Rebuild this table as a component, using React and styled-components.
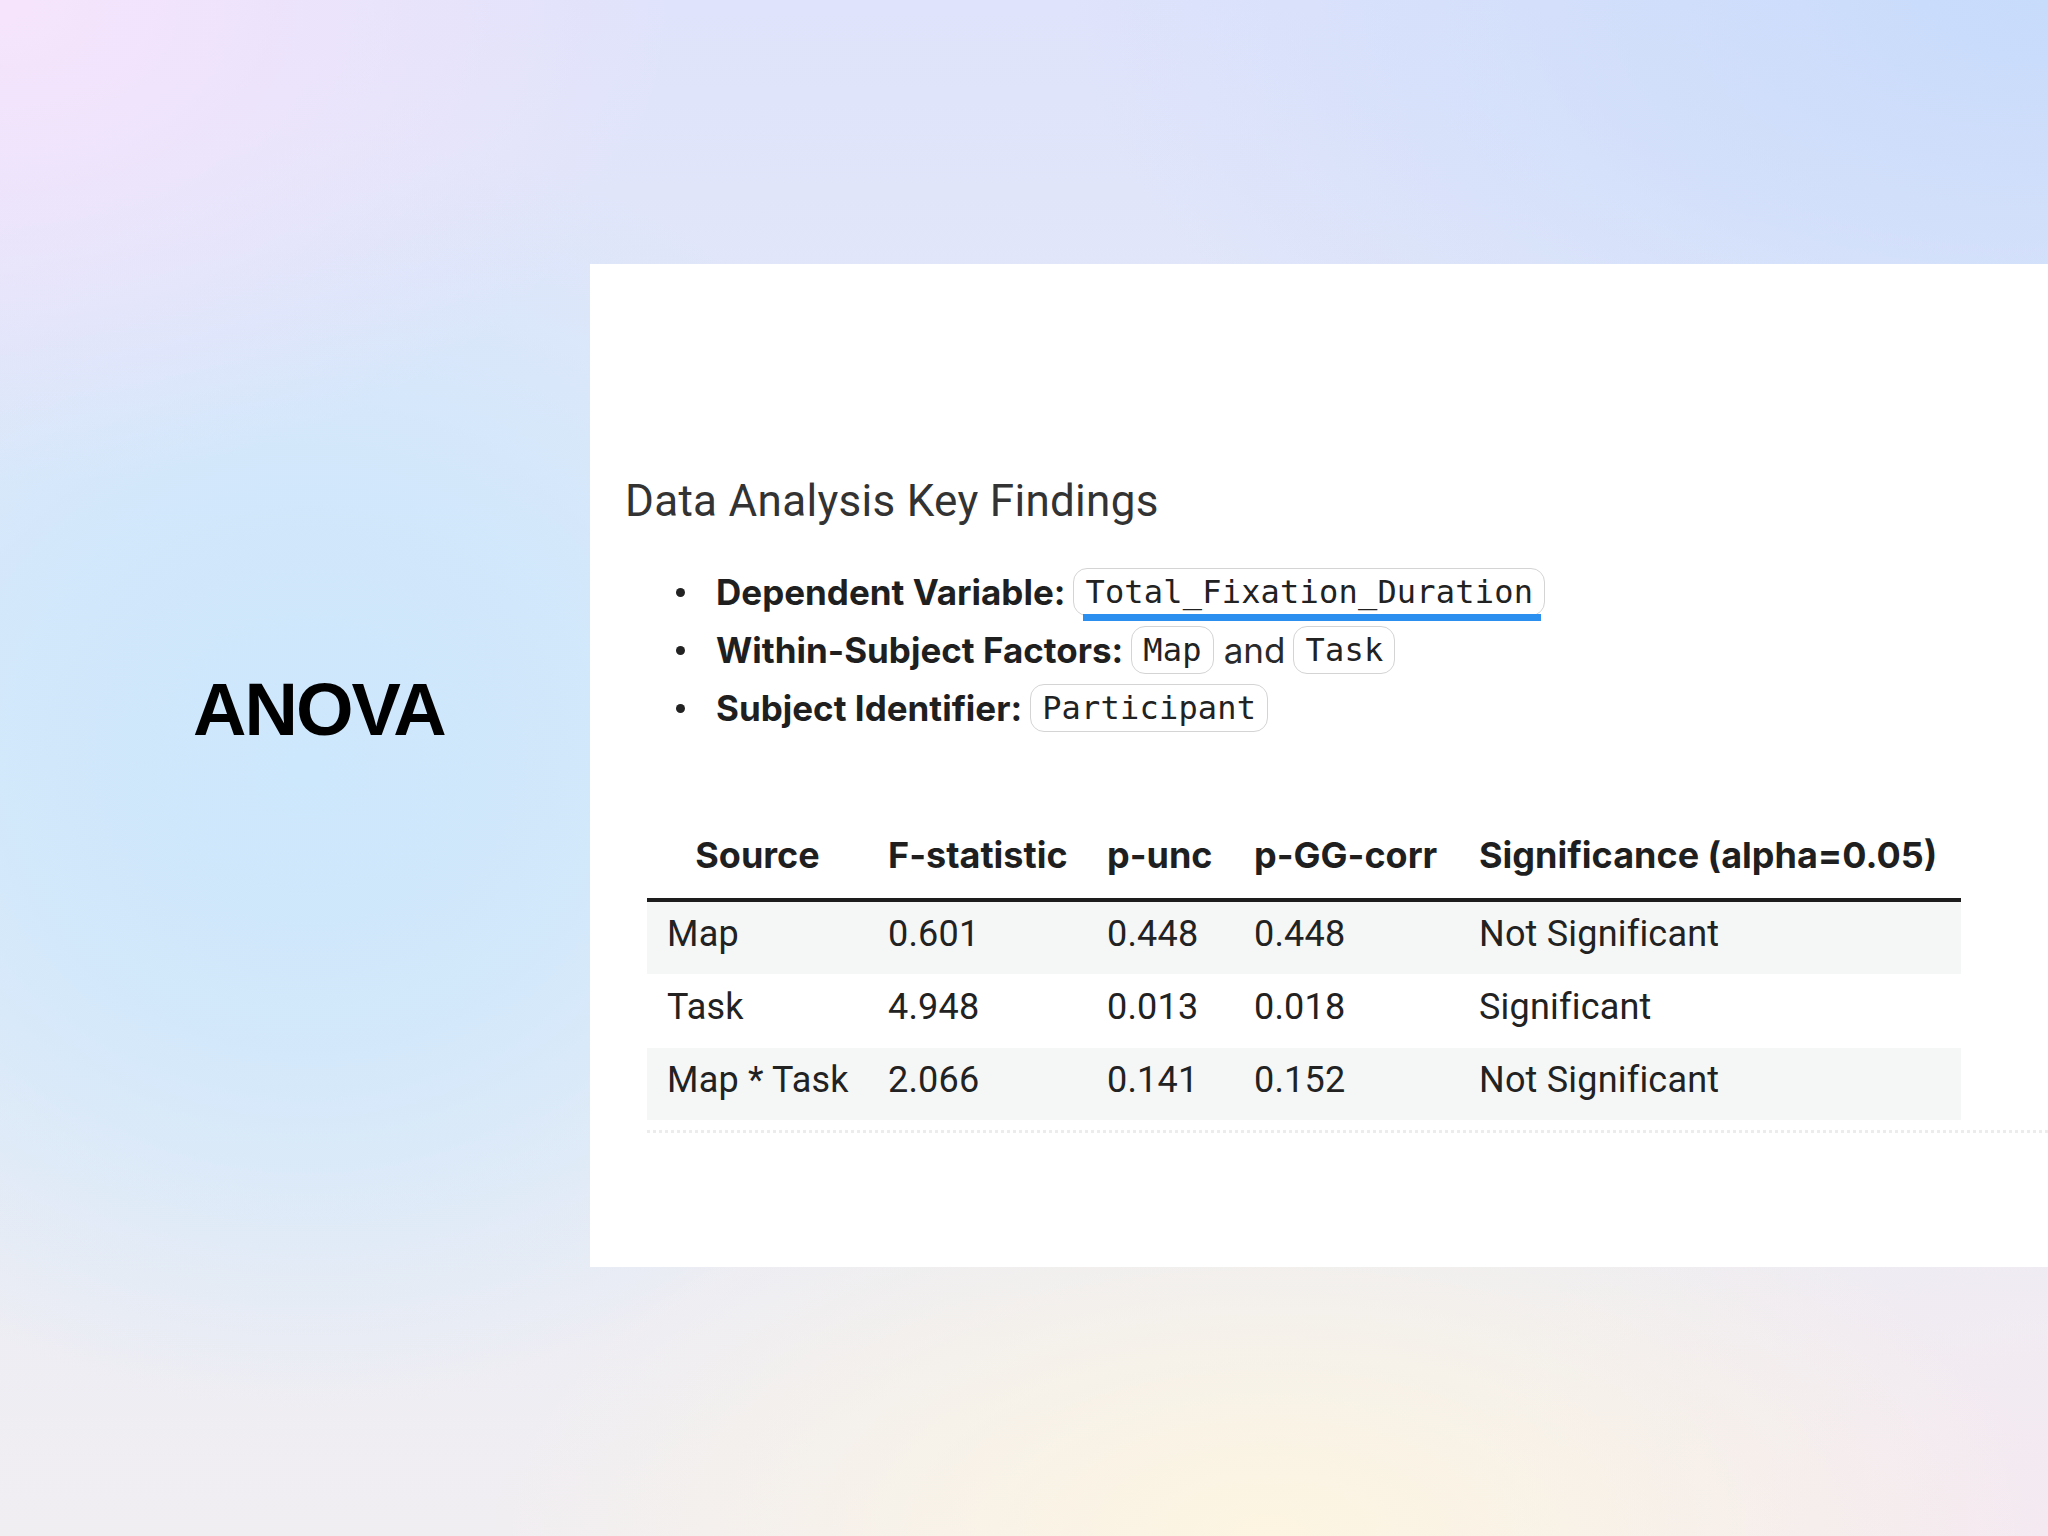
import React from 'react';
import styled, { createGlobalStyle } from 'styled-components';

const Global = createGlobalStyle`
  html, body { margin: 0; padding: 0; }
  body {
    width: 2048px;
    height: 1536px;
    overflow: hidden;
    font-family: Roboto, "Liberation Sans", sans-serif;
  }
`;

const Page = styled.div`
  width: 2048px;
  height: 1536px;
  display: grid;
  grid-template-columns: 590px 1fr;
  grid-template-rows: 264px 1003px 1fr;
  background:
    radial-gradient(ellipse 900px 650px at 0% 0%, rgba(246, 228, 252, 1) 0%, rgba(246, 228, 252, 0) 75%),
    radial-gradient(ellipse 1300px 700px at 100% 0%, rgba(199, 219, 251, 1) 0%, rgba(199, 219, 251, 0) 75%),
    radial-gradient(ellipse 850px 800px at 15% 50%, rgba(205, 231, 252, 1) 0%, rgba(205, 231, 252, 0.8) 35%, rgba(205, 231, 252, 0) 80%),
    radial-gradient(ellipse 1000px 520px at 62% 100%, rgba(253, 245, 225, 1) 0%, rgba(253, 245, 225, 0) 78%),
    radial-gradient(ellipse 800px 600px at 100% 100%, rgba(244, 233, 241, 1) 0%, rgba(244, 233, 241, 0) 75%),
    linear-gradient(180deg, #dfe3fb 0%, #e4ebf7 50%, #f1eef2 100%);
`;

const TitleCell = styled.div`
  grid-column: 1;
  grid-row: 2;
  padding: 409px 0 0 193px;
`;

const Title = styled.h1`
  margin: 0;
  font: 700 74px/1 "Liberation Sans", Arial, sans-serif;
  letter-spacing: -2px;
  color: #000;
`;

const Panel = styled.section`
  grid-column: 2;
  grid-row: 2;
  background: #ffffff;
  padding: 215px 0 0 35px;
  display: flex;
  flex-direction: column;
`;

const Heading = styled.h2`
  margin: 0;
  font: 400 44px/1 Roboto, "Liberation Sans", sans-serif;
  letter-spacing: 0.3px;
  color: #333333;
`;

const List = styled.ul`
  list-style: none;
  margin: 40px 0 0;
  padding: 0;
`;

const Item = styled.li`
  height: 58px;
  display: flex;
  align-items: center;
  padding-left: 51px;
  white-space: nowrap;

  &::before {
    content: "";
    flex: none;
    width: 9px;
    height: 9px;
    border-radius: 50%;
    background: #222;
    margin-right: 31px;
  }
`;

const Term = styled.span`
  font: 700 35px/1 Inter, Roboto, sans-serif;
  color: #1f1f1f;
`;

const Plain = styled.span`
  font: 400 35px/1 Inter, Roboto, sans-serif;
  color: #2a2a2a;
  margin-left: 10px;
`;

const Code = styled.code`
  position: relative;
  display: inline-flex;
  align-items: center;
  box-sizing: border-box;
  height: 48px;
  margin-left: 8px;
  padding: 0 11px;
  border: 1.5px solid #d4d4d4;
  border-radius: 14px;
  font: 400 32px/1 "DejaVu Sans Mono", "Liberation Mono", monospace;
  letter-spacing: 0.2px;
  color: #222;
`;

const Squiggle = styled.span`
  position: absolute;
  left: 9px;
  right: 3px;
  bottom: -6px;
  height: 7px;
  background: #2b8ff0;
`;

const TableArea = styled.div`
  margin: 80px 0 0 22px;
  display: flex;
  flex-direction: column;
`;

const cols = '221px 219px 147px 225px 502px';

const HeadRow = styled.div`
  width: 1314px;
  display: grid;
  grid-template-columns: ${cols};
  border-bottom: 4px solid #1d1d1d;
`;

const HeadCell = styled.div`
  padding: 20px 0 25px ${(p) => (p.$center ? '0' : '20px')};
  text-align: ${(p) => (p.$center ? 'center' : 'left')};
  font: 700 36px/1 Inter, Roboto, sans-serif;
  color: #1f1f1f;
  white-space: nowrap;
`;

const Row = styled.div`
  width: 1314px;
  height: ${(p) => (p.$shaded ? '72px' : '74px')};
  display: grid;
  grid-template-columns: ${cols};
  background: ${(p) => (p.$shaded ? '#f5f6f6' : 'transparent')};
`;

const Cell = styled.div`
  display: flex;
  align-items: center;
  padding: 0 0 8px 20px;
  font: 400 36px/1 Roboto, "Liberation Sans", sans-serif;
  letter-spacing: 0.2px;
  color: #222222;
  white-space: nowrap;
`;

const Rule = styled.div`
  margin-top: 10px;
  border-top: 3px dotted #ececec;
`;

const rows = [
  ['Map', '0.601', '0.448', '0.448', 'Not Significant'],
  ['Task', '4.948', '0.013', '0.018', 'Significant'],
  ['Map * Task', '2.066', '0.141', '0.152', 'Not Significant'],
];

export default function App() {
  return (
    <>
      <Global />
      <Page>
        <TitleCell>
          <Title>ANOVA</Title>
        </TitleCell>
        <Panel>
          <Heading>Data Analysis Key Findings</Heading>
          <List>
            <Item>
              <Term>Dependent Variable:</Term>
              <Code>
                Total_Fixation_Duration
                <Squiggle />
              </Code>
            </Item>
            <Item>
              <Term>Within-Subject Factors:</Term>
              <Code>Map</Code>
              <Plain>and</Plain>
              <Code>Task</Code>
            </Item>
            <Item>
              <Term>Subject Identifier:</Term>
              <Code>Participant</Code>
            </Item>
          </List>
          <TableArea>
            <HeadRow>
              <HeadCell $center>Source</HeadCell>
              <HeadCell>F-statistic</HeadCell>
              <HeadCell>p-unc</HeadCell>
              <HeadCell>p-GG-corr</HeadCell>
              <HeadCell>Significance (alpha=0.05)</HeadCell>
            </HeadRow>
            {rows.map((r, i) => (
              <Row key={r[0]} $shaded={i % 2 === 0}>
                {r.map((c, j) => (
                  <Cell key={j}>{c}</Cell>
                ))}
              </Row>
            ))}
            <Rule />
          </TableArea>
        </Panel>
      </Page>
    </>
  );
}
